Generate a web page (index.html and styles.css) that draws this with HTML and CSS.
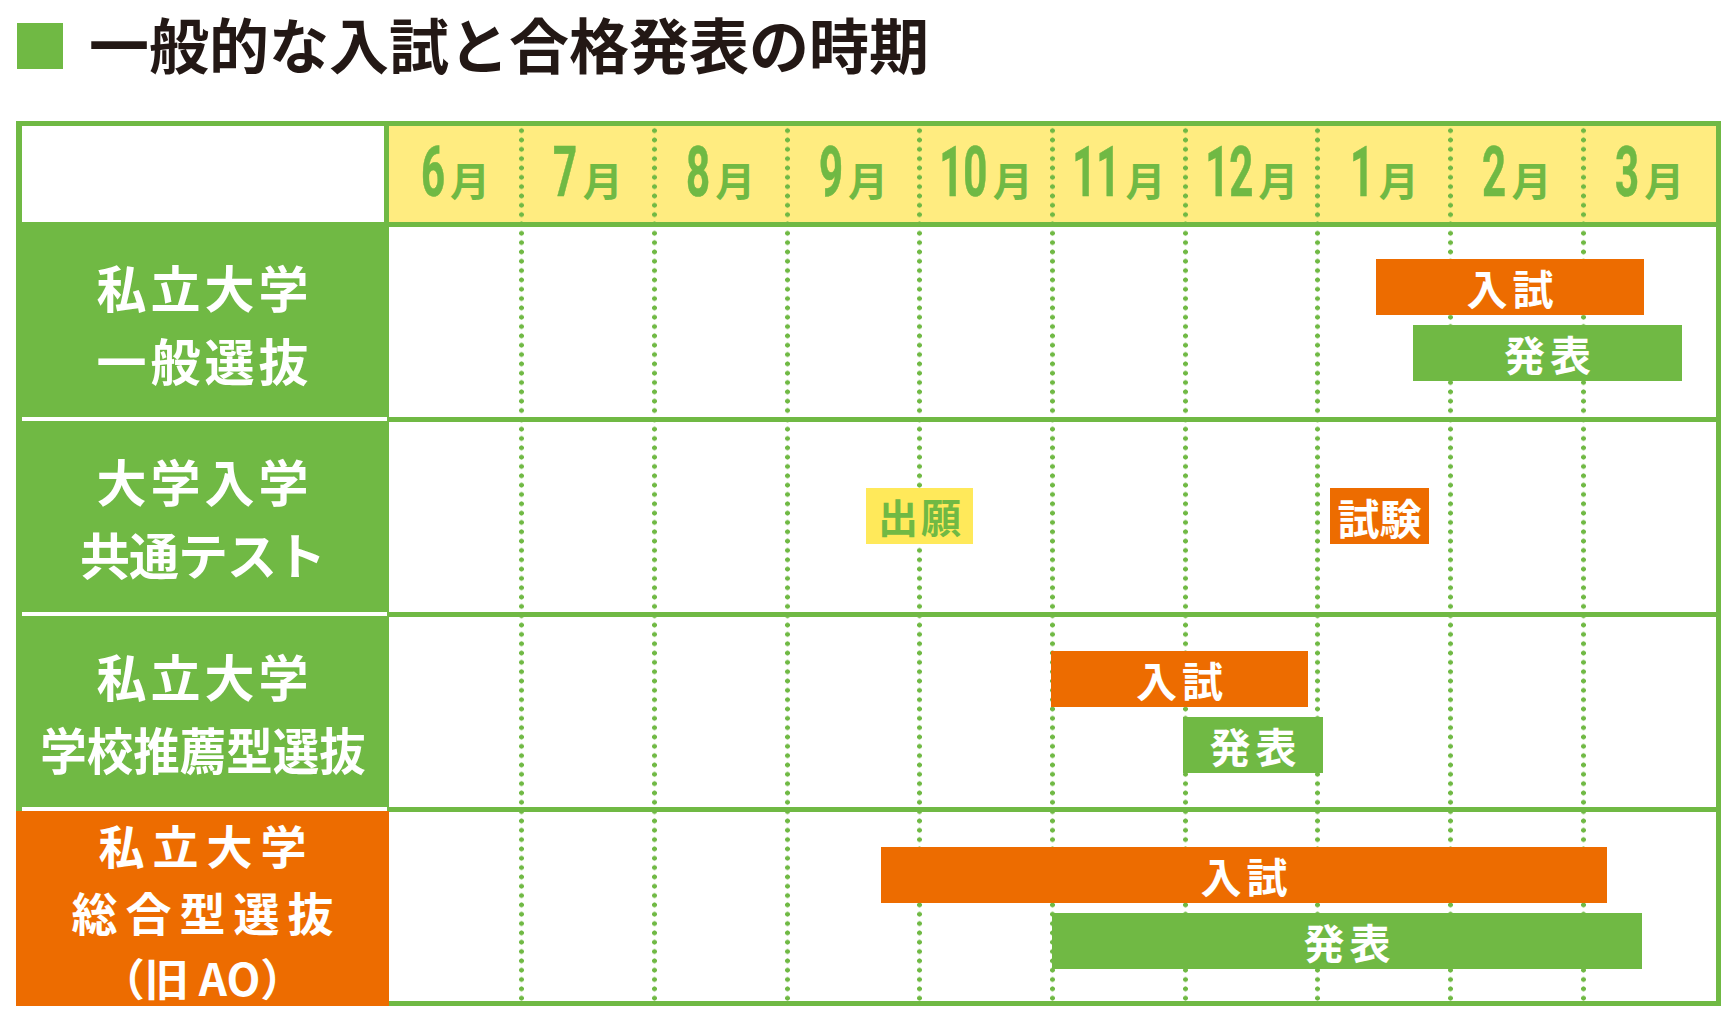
FILE: index.html
```html
<!DOCTYPE html>
<html lang="ja">
<head>
<meta charset="utf-8">
<title>一般的な入試と合格発表の時期</title>
<link rel="stylesheet" href="styles.css">
</head>
<body>
<div class="page">
  <div class="title">
    <span class="title-mark"></span>
    <h1 class="title-text">一般的な入試と合格発表の時期</h1>
  </div>

  <div class="chart">
    <div class="labels">
      <div class="label-head"></div>
      <div class="label label-1"><span>私立大学</span><span>一般選抜</span></div>
      <div class="sep"></div>
      <div class="label label-2"><span>大学入学</span><span class="tight">共通テスト</span></div>
      <div class="sep"></div>
      <div class="label label-3"><span>私立大学</span><span class="squeeze">学校推薦型選抜</span></div>
      <div class="sep"></div>
      <div class="label label-4"><span>私立大学</span><span class="wide">総合型選抜</span><span class="old">（旧 AO）</span></div>
    </div>

    <div class="timeline">
      <div class="months">
        <div class="month"><div class="m"><span class="num d1">6</span><span class="tsuki">月</span></div></div>
        <div class="month"><div class="m"><span class="num d1">7</span><span class="tsuki">月</span></div></div>
        <div class="month"><div class="m"><span class="num d1">8</span><span class="tsuki">月</span></div></div>
        <div class="month"><div class="m"><span class="num d1">9</span><span class="tsuki">月</span></div></div>
        <div class="month"><div class="m"><span class="num d2">10</span><span class="tsuki">月</span></div></div>
        <div class="month"><div class="m"><span class="num d2">11</span><span class="tsuki">月</span></div></div>
        <div class="month"><div class="m"><span class="num d2">12</span><span class="tsuki">月</span></div></div>
        <div class="month"><div class="m"><span class="num d1">1</span><span class="tsuki">月</span></div></div>
        <div class="month"><div class="m"><span class="num d1">2</span><span class="tsuki">月</span></div></div>
        <div class="month"><div class="m"><span class="num d1">3</span><span class="tsuki">月</span></div></div>
      </div>

      <div class="row">
        <div class="bar bar-orange" style="left:987px;top:32px;width:268px">入試</div>
        <div class="bar bar-green" style="left:1024px;top:98px;width:269px">発表</div>
      </div>
      <div class="row">
        <div class="bar bar-yellow" style="left:477px;top:66px;width:107px">出願</div>
        <div class="bar bar-orange bar-tight" style="left:941px;top:66px;width:99px">試験</div>
      </div>
      <div class="row">
        <div class="bar bar-orange" style="left:662px;top:34px;width:257px">入試</div>
        <div class="bar bar-green" style="left:794px;top:100px;width:140px">発表</div>
      </div>
      <div class="row">
        <div class="bar bar-orange" style="left:492px;top:35px;width:726px">入試</div>
        <div class="bar bar-green" style="left:663px;top:101px;width:590px">発表</div>
      </div>

      <div class="gridlines">
        <span></span><span></span><span></span><span></span><span></span>
        <span></span><span></span><span></span><span></span><span></span>
      </div>
    </div>
  </div>
</div>
</body>
</html>
```

FILE: styles.css
```css
body {
  margin: 0;
  background: #ffffff;
  font-family: "Noto Sans CJK JP", "Noto Sans", sans-serif;
}

.page {
  width: 1732px;
  height: 1016px;
  overflow: hidden;
}

/* ---------- title ---------- */
.title {
  display: flex;
  align-items: center;
  gap: 26px;
  height: 46px;
  margin: 23px 0 0 17px;
}

.title-mark {
  flex: none;
  width: 46px;
  height: 46px;
  background: #70b944;
}

.title-text {
  margin: -6px 0 0;
  font-family: "Noto Sans CJK JP", sans-serif;
  font-weight: 700;
  font-size: 60px;
  line-height: 46px;
  color: #231815;
  letter-spacing: 0;
  white-space: nowrap;
}

/* ---------- chart ---------- */
.chart {
  display: flex;
  width: 1705px;
  height: 885px;
  margin: 52px 0 0 16px;
}

.labels {
  flex: none;
  width: 373px;
  display: flex;
  flex-direction: column;
  background: #70b944;
}

.label-head {
  flex: none;
  height: 101px;
  box-sizing: border-box;
  background: #ffffff;
  border-style: solid;
  border-color: #70b944;
  border-width: 5px 5px 0 6px;
}

.sep {
  flex: none;
  height: 4px;
  background: #ffffff;
  border-left: 6px solid #70b944;
  border-right: 2px solid #70b944;
}

.label {
  flex: none;
  box-sizing: border-box;
  display: flex;
  flex-direction: column;
  align-items: center;
  justify-content: center;
  color: #ffffff;
  font-family: "Noto Sans CJK JP", sans-serif;
  font-weight: 700;
  font-size: 50px;
  line-height: 73px;
  letter-spacing: 4px;
  white-space: nowrap;
}

.label span {
  padding-left: 4px;
}

.label-1 {
  height: 195px;
  padding-top: 6px;
}

.label-2,
.label-3 {
  height: 191px;
}

.label-4 {
  height: 195px;
  padding-top: 2px;
  font-size: 46px;
  line-height: 67px;
  letter-spacing: 8px;
  background: #ed6c00;
}

.label-4 span {
  padding-left: 8px;
}

.label .tight {
  letter-spacing: -1px;
  padding-left: 0;
}

.label .squeeze {
  letter-spacing: 0;
  padding-left: 0;
  transform: scaleX(0.93);
}

.label .wide {
  letter-spacing: 8px;
}

.label .old {
  font-size: 44px;
  line-height: 64px;
  letter-spacing: 0;
  padding-left: 0;
}

/* ---------- timeline ---------- */
.timeline {
  position: relative;
  flex: none;
  width: 1332px;
  box-sizing: border-box;
  padding: 5px 5px 5px 0;
  background: #70b944;
  display: grid;
  grid-template-rows: 96px 190px 190px 190px 189px;
  row-gap: 5px;
}

.months {
  background: #ffec80;
  display: grid;
  grid-template-columns: repeat(10, 1fr);
  color: #70b944;
}

.month {
  display: flex;
  align-items: center;
  justify-content: center;
  padding-bottom: 4px;
}

.m {
  white-space: nowrap;
  line-height: 1;
}

.num {
  display: inline-block;
  font-family: Roboto, "Liberation Sans", sans-serif;
  font-weight: 700;
  font-size: 70px;
  line-height: 1;
  -webkit-text-stroke: 0.6px #70b944;
  transform: scaleX(0.6);
  transform-origin: 100% 50%;
}

.num.d1 {
  margin-left: -16px;
}

.num.d2 {
  margin-left: -32px;
}

.tsuki {
  font-family: "Noto Sans CJK JP", sans-serif;
  font-weight: 700;
  font-size: 40px;
  margin-left: 5px;
}

.row {
  position: relative;
  background: #ffffff;
}

.bar {
  position: absolute;
  z-index: 2;
  height: 56px;
  box-sizing: border-box;
  display: flex;
  align-items: center;
  justify-content: center;
  padding-left: 5px;
  color: #ffffff;
  font-family: "Noto Sans CJK JP", sans-serif;
  font-weight: 700;
  font-size: 41px;
  letter-spacing: 5px;
  white-space: nowrap;
}

.bar-orange {
  background: #ed6c00;
}

.bar-green {
  background: #70b944;
}

.bar-yellow {
  background: #ffe95a;
  color: #70b944;
  letter-spacing: 3px;
  padding-left: 3px;
  font-size: 40px;
}

.bar-tight {
  letter-spacing: 0;
  padding-left: 0;
  font-size: 42px;
}

.gridlines {
  position: absolute;
  z-index: 1;
  top: 5px;
  bottom: 5px;
  left: 0;
  right: 5px;
  display: grid;
  grid-template-columns: repeat(10, 1fr);
  pointer-events: none;
}

.gridlines span {
  position: relative;
}

.gridlines span + span::before {
  content: "";
  position: absolute;
  top: 0;
  bottom: 0;
  left: -2.5px;
  width: 5px;
  background-image: radial-gradient(circle at 2.5px 4.66px, #70b944 2.1px, rgba(112, 185, 68, 0) 2.7px);
  background-size: 5px 9.33px;
  background-repeat: repeat-y;
}
```
